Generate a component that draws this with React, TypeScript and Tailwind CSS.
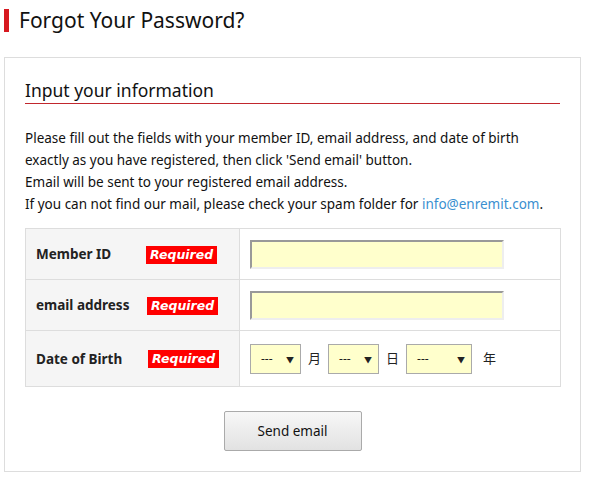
import React from 'react';

const font = { fontFamily: '"Noto Sans", "Noto Sans CJK JP", sans-serif' };
const badgeFont = { fontFamily: '"DejaVu Sans", sans-serif' };

const Required = () => (
  <span
    className="inline-block bg-[#ff0000] text-white font-bold italic text-[12.5px] leading-[18px] px-[4px] h-[18px] align-middle"
    style={badgeFont}
  >
    Required
  </span>
);

const DateSelect = ({ width }: { width: string }) => (
  <div className={`relative ${width} h-[30px] border border-[#aaa] bg-[#ffffcc] flex items-center pl-[10px] text-[12px]`}>
    <span>---</span>
    <span className="absolute right-[6px] top-[9px] text-[8px]">▼</span>
  </div>
);

export default function App() {
  return (
    <div className="bg-white text-[#222] w-[589px] h-[490px]" style={font}>
      <div className="pt-[9px] pl-[4px] flex items-center">
        <div className="w-[5px] h-[23px] bg-[#d71920]" />
        <h1 className="ml-[10px] text-[21px] leading-[23px] text-[#111]">Forgot Your Password?</h1>
      </div>

      <div className="mt-[25px] mx-[4px] w-[577px] border border-[#ddd] px-[20px] pt-[20px] pb-[20px]">
        <h2 className="text-[17.5px] leading-[24px] text-[#111] border-b border-[#c1272d] pb-[1px]">
          Input your information
        </h2>

        <div className="mt-[23px] text-[13.5px] leading-[22px] text-[#111]">
          <p>Please fill out the fields with your member ID, email address, and date of birth</p>
          <p>exactly as you have registered, then click 'Send email' button.</p>
          <p>Email will be sent to your registered email address.</p>
          <p>
            If you can not find our mail, please check your spam folder for{' '}
            <a className="text-[#3a8fd0]">info@enremit.com</a>.
          </p>
        </div>

        <table className="mt-[13px] w-[536px] border-collapse text-[13.5px]">
          <tbody>
            <tr className="h-[51px]">
              <th className="w-[214px] bg-[#f5f5f5] border border-[#ddd] text-left font-bold pl-[10px]">
                <span className="inline-block w-[110px] align-middle">Member ID</span>
                <Required />
              </th>
              <td className="border border-[#ddd] pl-[10px]">
                <div className="w-[254px] h-[29px] bg-[#ffffcc] border-2 border-t-[#999] border-l-[#999] border-b-[#eee] border-r-[#eee]" />
              </td>
            </tr>
            <tr className="h-[51px]">
              <th className="bg-[#f5f5f5] border border-[#ddd] text-left font-bold pl-[10px]">
                <span className="inline-block w-[111px] align-middle">email address</span>
                <Required />
              </th>
              <td className="border border-[#ddd] pl-[10px]">
                <div className="w-[254px] h-[29px] bg-[#ffffcc] border-2 border-t-[#999] border-l-[#999] border-b-[#eee] border-r-[#eee]" />
              </td>
            </tr>
            <tr className="h-[56px]">
              <th className="bg-[#f5f5f5] border border-[#ddd] text-left font-bold pl-[10px]">
                <span className="inline-block w-[112px] align-middle">Date of Birth</span>
                <Required />
              </th>
              <td className="border border-[#ddd] pl-[10px]">
                <div className="flex items-center text-[13px]">
                  <DateSelect width="w-[51px]" />
                  <span className="mx-[7px]">月</span>
                  <DateSelect width="w-[51px]" />
                  <span className="mx-[7px]">日</span>
                  <DateSelect width="w-[66px]" />
                  <span className="ml-[11px]">年</span>
                </div>
              </td>
            </tr>
          </tbody>
        </table>

        <div className="flex justify-center mt-[24px]">
          <button className="w-[138px] h-[40px] border border-[#aaa] rounded-[2px] bg-gradient-to-b from-[#f7f7f7] to-[#e2e2e2] text-[13.5px] text-[#111]">
            Send email
          </button>
        </div>
      </div>
    </div>
  );
}
